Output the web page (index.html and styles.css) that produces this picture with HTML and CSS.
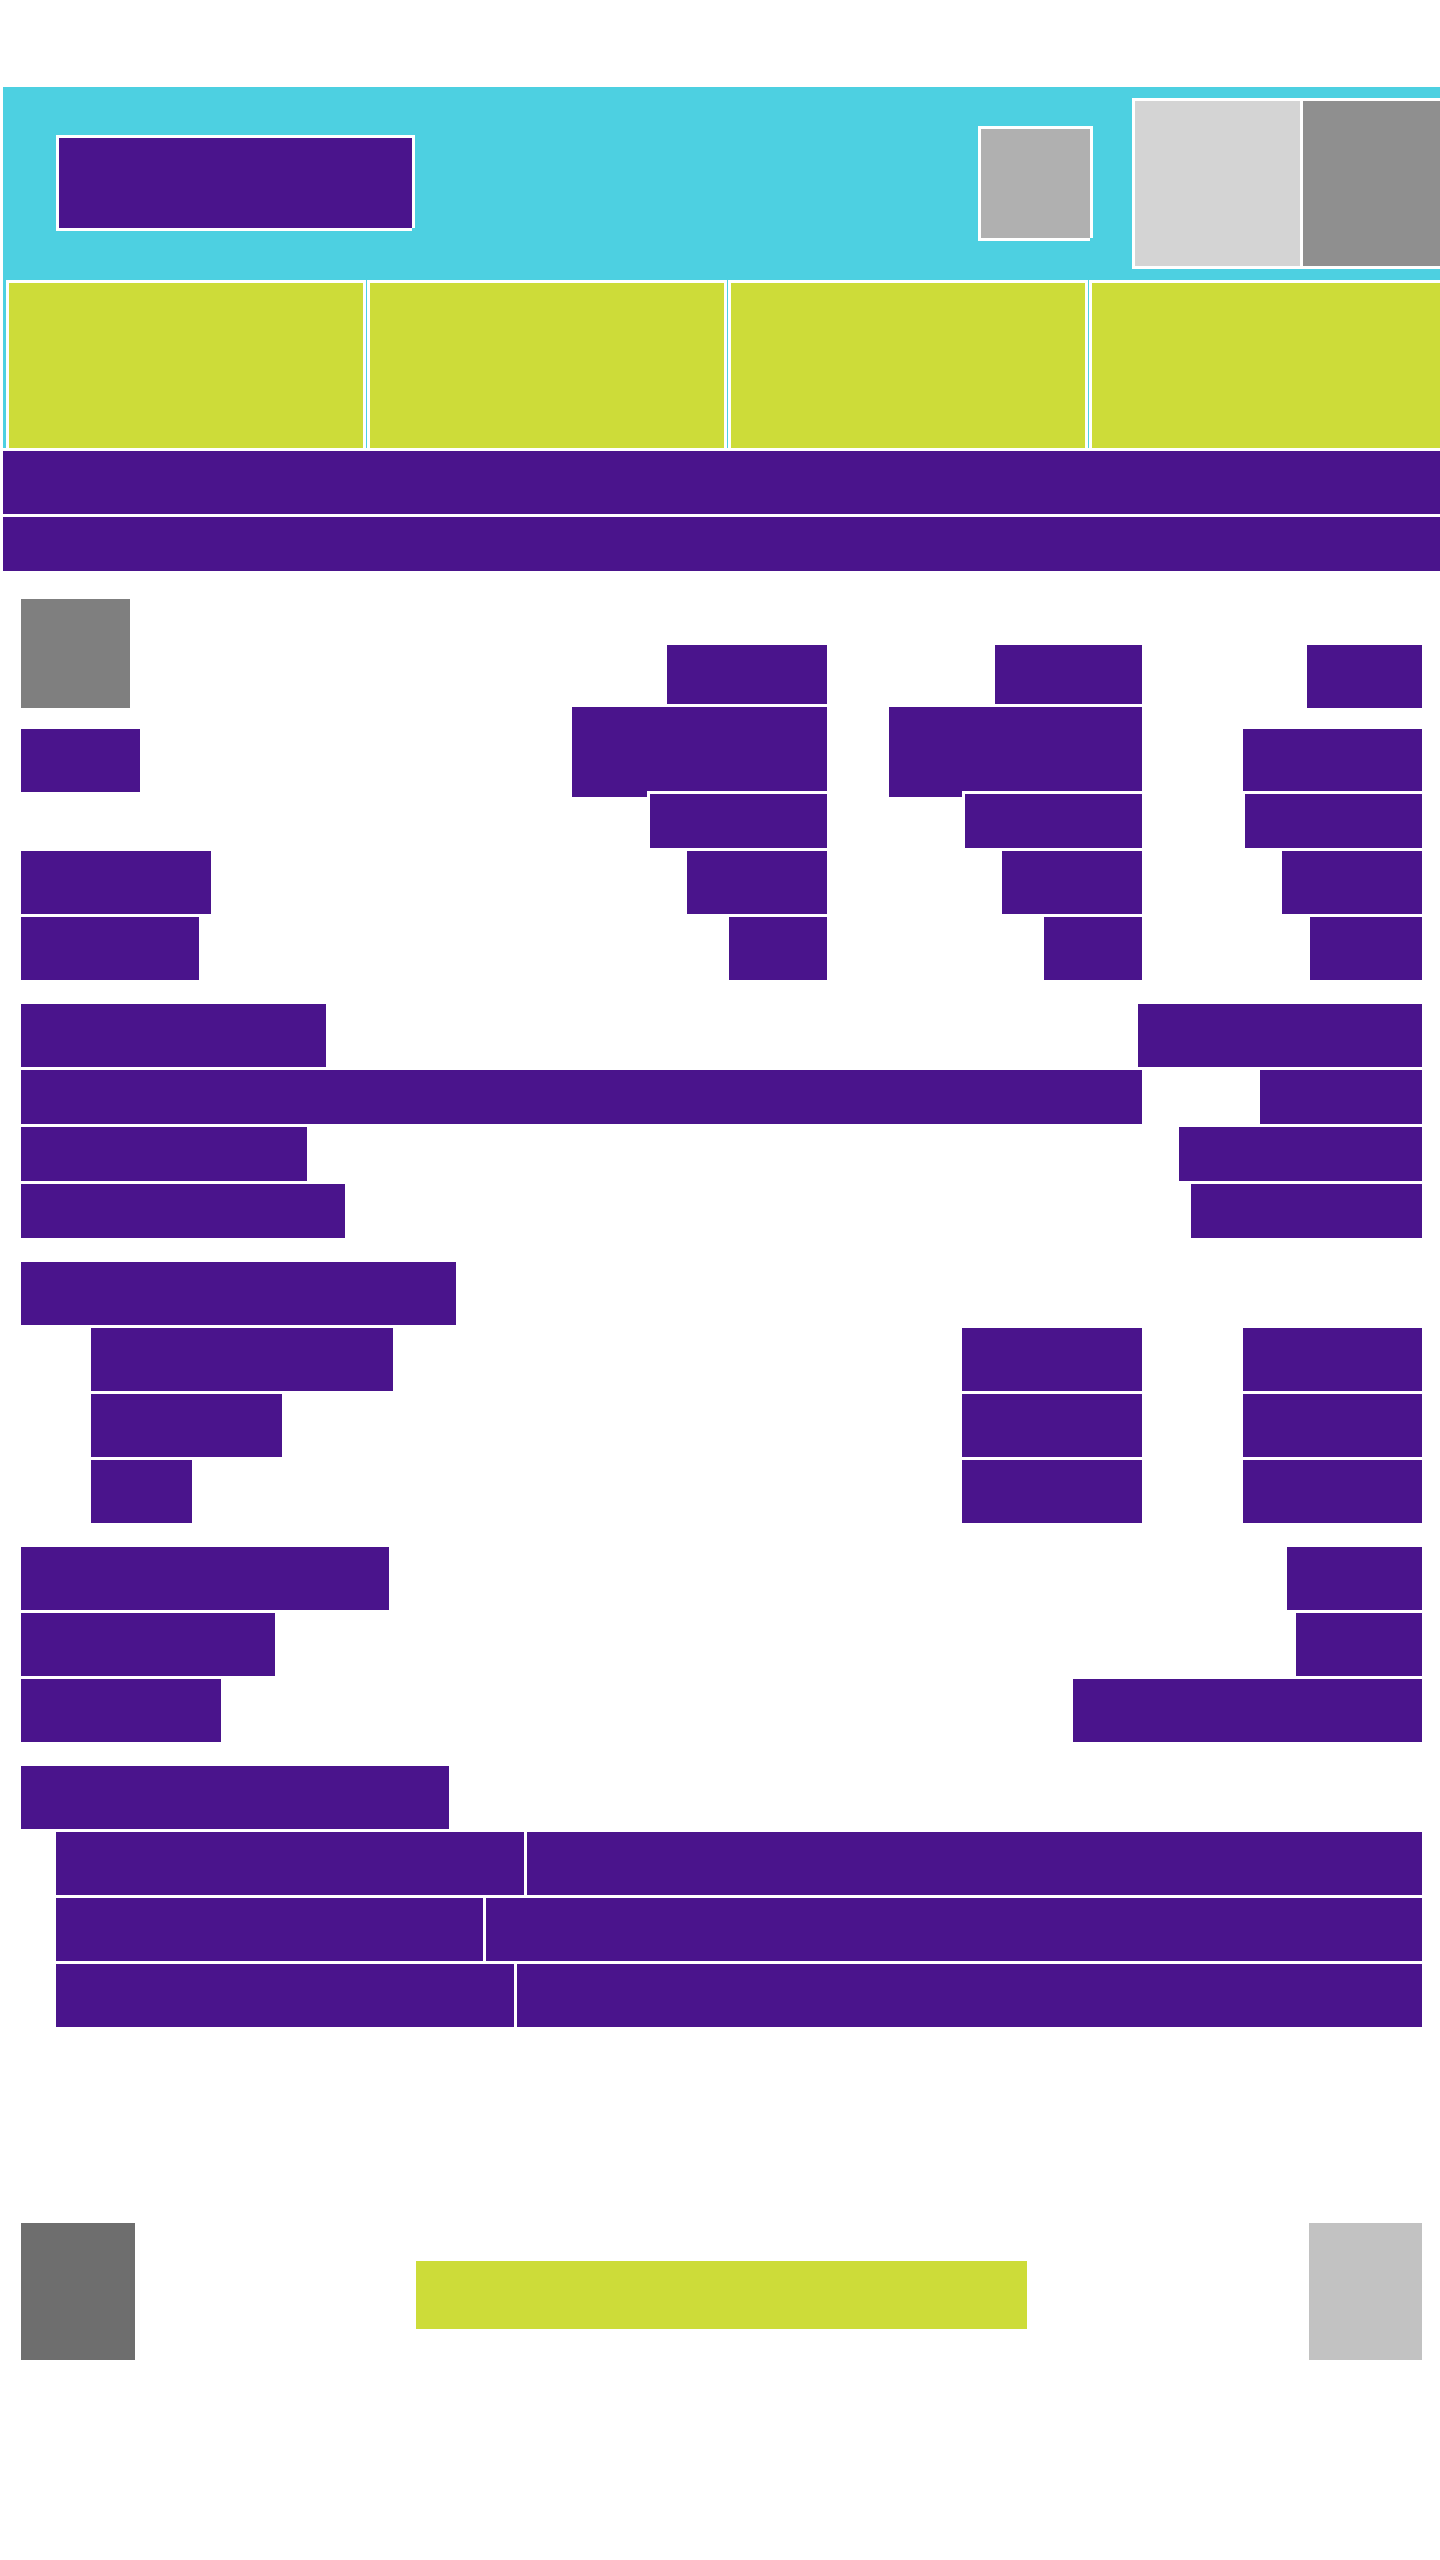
FILE: index.html
```html
<!DOCTYPE html>
<html>
<head>
    <title>Product page</title>
    <link rel="stylesheet" href="styles.css">
</head>
<body>
    <div class="header">
        <div class="header-top">
            <div class="logo framed"></div>
            <div class="search framed"></div>
            <div class="account">
                <div class="account-light"></div>
                <div class="account-dark"></div>
            </div>
        </div>
        <div class="tabs">
            <div class="tab"></div>
            <div class="tab"></div>
            <div class="tab"></div>
            <div class="tab"></div>
        </div>
    </div>
    <div class="nav-bar nav-main"></div>
    <div class="nav-bar nav-sub"></div>

    <div class="content">
        <div class="price-table">
            <div class="thumb"></div>
            <div class="bar head w-160 h-59"></div>
            <div class="bar head w-147 h-59"></div>
            <div class="bar head w-115 h-63"></div>

            <div class="bar label w-119 drop"></div>
            <div class="bar tall w-255"></div>
            <div class="bar tall w-253"></div>
            <div class="bar cell w-179 drop"></div>

            <div></div>
            <div class="bar cell outlined"></div>
            <div class="bar cell outlined"></div>
            <div class="bar cell outlined"></div>

            <div class="bar label w-190 low"></div>
            <div class="bar cell w-140 low"></div>
            <div class="bar cell w-140 low"></div>
            <div class="bar cell w-140 low"></div>

            <div class="bar label w-178 low"></div>
            <div class="bar cell w-98 low"></div>
            <div class="bar cell w-98 low"></div>
            <div class="bar cell w-112 low"></div>
        </div>

        <div class="section">
            <div class="row">
                <div class="bar w-305 h-63"></div>
                <div class="bar w-284 h-63"></div>
            </div>
            <div class="row">
                <div class="bar w-1121 h-54"></div>
                <div class="bar w-162 h-54"></div>
            </div>
            <div class="row">
                <div class="bar w-286 h-54"></div>
                <div class="bar w-243 h-54"></div>
            </div>
            <div class="row">
                <div class="bar w-324 h-54"></div>
                <div class="bar w-231 h-54"></div>
            </div>
        </div>

        <div class="section">
            <div class="bar w-435 h-63"></div>
            <div class="split">
                <div class="bar w-302 h-63"></div>
                <div class="bar h-63"></div>
                <div class="bar h-63"></div>
            </div>
            <div class="split">
                <div class="bar w-191 h-63"></div>
                <div class="bar h-63"></div>
                <div class="bar h-63"></div>
            </div>
            <div class="split">
                <div class="bar w-101 h-63"></div>
                <div class="bar h-63"></div>
                <div class="bar h-63"></div>
            </div>
        </div>

        <div class="section">
            <div class="row">
                <div class="bar w-368 h-63"></div>
                <div class="bar w-135 h-63"></div>
            </div>
            <div class="row">
                <div class="bar w-254 h-63"></div>
                <div class="bar w-126 h-63"></div>
            </div>
            <div class="row">
                <div class="bar w-200 h-63"></div>
                <div class="bar w-349 h-63"></div>
            </div>
        </div>

        <div class="section">
            <div class="bar w-428 h-63"></div>
            <div class="pair">
                <div class="bar w-468 h-63"></div>
                <div class="bar grow h-63"></div>
            </div>
            <div class="pair">
                <div class="bar w-427 h-63"></div>
                <div class="bar grow h-63"></div>
            </div>
            <div class="pair">
                <div class="bar w-458 h-63"></div>
                <div class="bar grow h-63"></div>
            </div>
        </div>

        <div class="footer">
            <div class="footer-left"></div>
            <div class="footer-button"></div>
            <div class="footer-right"></div>
        </div>
    </div>
</body>
</html>
```

FILE: styles.css
```css
* {
    box-sizing: border-box;
}
html, body {
    margin: 0;
    background: #fff;
}
body {
    padding: 87px 0 0 3px;
    min-height: 2560px;
    overflow-x: hidden;
    font-family: "Liberation Sans", Arial, sans-serif;
}

/* header */
.header {
    height: 361px;
    background: #4dd0e1;
    overflow: hidden;
}
.header-top {
    display: flex;
    align-items: flex-start;
    height: 193px;
}
.framed {
    flex: none;
    border: 3px solid #fff;
    /* the frames lose their bottom right corner */
    clip-path: polygon(0 0, 100% 0, 100% calc(100% - 3px), calc(100% - 3px) calc(100% - 3px), calc(100% - 3px) 100%, 0 100%);
}
.logo {
    width: 359px;
    height: 96px;
    margin: 48px 0 0 53px;
    background: #4a148c;
}
.search {
    width: 115px;
    height: 115px;
    margin: 39px 0 0 563px;
    background: #b0b0b0;
}
.account {
    flex: none;
    display: flex;
    gap: 3px;
    padding: 3px;
    margin: 11px 0 0 39px;
    background: #fff;
}
.account-light, .account-dark {
    width: 165px;
    height: 165px;
}
.account-light {
    background: #d4d4d4;
}
.account-dark {
    background: #8f8f8f;
}
.tabs {
    display: flex;
    gap: 1px;
    height: 168px;
    padding-left: 3px;
}
.tab {
    flex: none;
    width: 360px;
    background: #cddc39;
    border: 3px solid #fff;
    border-bottom: 0;
}

.nav-bar {
    margin-top: 3px;
    background: #4a148c;
}
.nav-main {
    height: 63px;
}
.nav-sub {
    height: 54px;
}

/* content */
.content {
    width: 1401px;
    margin: 28px 0 0 18px;
}
.bar {
    background: #4a148c;
}
.h-54 { height: 54px; }
.h-59 { height: 59px; }
.h-63 { height: 63px; }
.w-98 { width: 98px; }
.w-101 { width: 101px; }
.w-112 { width: 112px; }
.w-115 { width: 115px; }
.w-119 { width: 119px; }
.w-126 { width: 126px; }
.w-135 { width: 135px; }
.w-140 { width: 140px; }
.w-147 { width: 147px; }
.w-160 { width: 160px; }
.w-162 { width: 162px; }
.w-178 { width: 178px; }
.w-179 { width: 179px; }
.w-190 { width: 190px; }
.w-191 { width: 191px; }
.w-200 { width: 200px; }
.w-231 { width: 231px; }
.w-243 { width: 243px; }
.w-253 { width: 253px; }
.w-254 { width: 254px; }
.w-255 { width: 255px; }
.w-284 { width: 284px; }
.w-286 { width: 286px; }
.w-302 { width: 302px; }
.w-305 { width: 305px; }
.w-324 { width: 324px; }
.w-349 { width: 349px; }
.w-368 { width: 368px; }
.w-427 { width: 427px; }
.w-428 { width: 428px; }
.w-435 { width: 435px; }
.w-458 { width: 458px; }
.w-468 { width: 468px; }
.w-1121 { width: 1121px; }

.price-table {
    display: grid;
    grid-template-columns: 300px 506px 315px 280px;
    grid-template-rows: 109px 83px 57px 66px 66px;
    justify-items: end;
    align-items: start;
}
.thumb {
    justify-self: start;
    width: 109px;
    height: 109px;
    background: #7f7f7f;
}
.head {
    margin-top: 46px;
}
.label {
    justify-self: start;
    height: 63px;
}
.cell {
    height: 63px;
}
.tall {
    height: 90px;
    margin-top: -1px;
}
.drop {
    margin-top: 21px;
}
.low {
    align-self: end;
}
.outlined {
    width: 180px;
    height: 57px;
    border-top: 3px solid #fff;
    border-left: 3px solid #fff;
}

.section {
    display: flex;
    flex-direction: column;
    gap: 3px;
    margin-top: 24px;
}
.row {
    display: flex;
    justify-content: space-between;
}
.split {
    display: grid;
    grid-template-columns: 1fr 180px 179px;
    column-gap: 101px;
    padding-left: 70px;
}
.pair {
    display: flex;
    gap: 3px;
    padding-left: 35px;
}
.grow {
    flex: 1;
}

/* footer */
.footer {
    display: flex;
    align-items: flex-start;
    margin-top: 196px;
}
.footer-left {
    width: 114px;
    height: 137px;
    background: #6e6e6e;
}
.footer-button {
    width: 611px;
    height: 68px;
    margin: 38px 0 0 281px;
    background: #cddc39;
}
.footer-right {
    width: 113px;
    height: 137px;
    margin-left: auto;
    background: #c2c2c2;
}
```
